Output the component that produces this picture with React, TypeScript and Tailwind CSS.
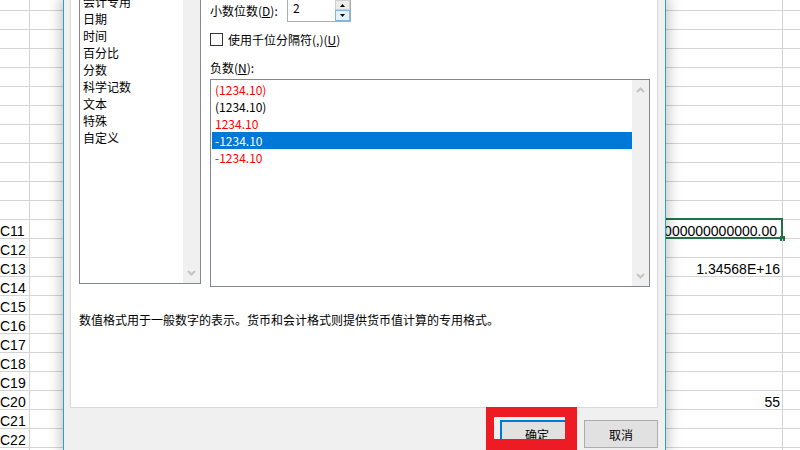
import React from "react";

const categories = ["常规", "数值", "货币", "会计专用", "日期", "时间", "百分比", "分数", "科学记数", "文本", "特殊", "自定义"];

const negatives: { text: string; color: string; selected?: boolean }[] = [
  { text: "(1234.10)", color: "text-[#ff0000]" },
  { text: "(1234.10)", color: "text-black" },
  { text: "1234.10", color: "text-[#ff0000]" },
  { text: "-1234.10", color: "text-white", selected: true },
  { text: "-1234.10", color: "text-[#ff0000]" },
];

function Chevron({ up }: { up?: boolean }) {
  return (
    <svg width="9" height="6" viewBox="0 0 9 6">
      {up ? (
        <polyline points="1,5 4.5,1.5 8,5" fill="none" stroke="#c4c4c4" strokeWidth="2" />
      ) : (
        <polyline points="1,1 4.5,4.5 8,1" fill="none" stroke="#c4c4c4" strokeWidth="2" />
      )}
    </svg>
  );
}

function Sheet() {
  const rows = Array.from({ length: 25 }, (_, k) => k);
  return (
    <div className="-mt-[8px] flex flex-col font-['Liberation_Sans',Arial,sans-serif] text-[14px] leading-[14px] text-black">
      {rows.map((k) => {
        const label = k >= 12 && k <= 23 ? `C${k - 1}` : "";
        let right = "";
        if (k === 12) right = "13456789000000000000.00";
        if (k === 14) right = "1.34568E+16";
        if (k === 21) right = "55";
        return (
          <div key={k} className="relative flex h-[19px] border-b border-[#d4d4d4]">
            <div className="flex w-[30px] items-end overflow-hidden whitespace-nowrap border-r border-[#d4d4d4]">
              {label}
            </div>
            <div
              className={`flex w-[753px] items-end justify-end overflow-hidden whitespace-nowrap border-r border-[#d4d4d4] ${
                k === 12 ? "pr-[5px]" : "pr-[2px]"
              }`}
            >
              {right}
            </div>
            <div className="flex-1" />
            {k === 12 && (
              <>
                <div className="absolute left-[400px] top-[-2px] h-[21px] w-[383px] border-2 border-[#217346]" />
                <div className="absolute left-[780px] top-[16px] h-[5px] w-[5px] bg-[#217346]" />
              </>
            )}
          </div>
        );
      })}
    </div>
  );
}

export default function App() {
  return (
    <div className="relative h-[450px] w-[800px] overflow-hidden bg-white">
      <Sheet />

      {/* Dialog window */}
      <div className="absolute left-[63px] top-0 z-10 flex h-[450px] w-[603px] flex-col border-x border-[#2aa3b8] bg-[#f0f0f0] pl-[6px] pr-[7px] font-['Noto_Sans_CJK_SC','Noto_Sans',sans-serif] text-[12px] leading-[17px] text-black shadow-[0_0_12px_3px_rgba(0,0,0,0.22)]">
        <div className="flex h-[408px] flex-col border-x border-b border-[#d9d9d9] bg-white pl-[8px]">
          <div className="-mt-[60px] flex">
            {/* Category list */}
            <div className="flex h-[344px] w-[122px] border border-[#828790] bg-white">
              <div className="flex flex-1 flex-col pt-[1px]">
                {categories.map((c) => (
                  <div
                    key={c}
                    className={`h-[17px] whitespace-nowrap pl-[3px] ${c === "数值" ? "bg-[#0078d7] text-white" : ""}`}
                  >
                    {c}
                  </div>
                ))}
              </div>
              <div className="flex w-[17px] flex-col items-center justify-end bg-[#f0f0f0] pb-[7px]">
                <Chevron />
              </div>
            </div>

            {/* Right column */}
            <div className="ml-[9px] mt-[59px] flex w-[440px] flex-col">
              <div className="flex h-[23px] items-center">
                <div className="w-[77px] whitespace-nowrap">
                  小数位数(<span className="underline">D</span>):
                </div>
                <div className="flex h-[23px] w-[64px] border border-[#abadb3] bg-white">
                  <div className="-mt-[1px] flex-1 pl-[5px]">2</div>
                  <div className="flex w-[15px] flex-col">
                    <div className="flex h-[10px] items-center justify-center border border-[#cfcfcf] bg-[#ececec]">
                      <svg width="5" height="3" viewBox="0 0 5 3">
                        <polygon points="0,3 2.5,0 5,3" fill="#000" />
                      </svg>
                    </div>
                    <div className="flex h-[11px] items-center justify-center border border-[#7eb4ea] bg-[#e5f1fb]">
                      <svg width="5" height="3" viewBox="0 0 5 3">
                        <polygon points="0,0 2.5,3 5,0" fill="#000" />
                      </svg>
                    </div>
                  </div>
                </div>
              </div>

              <div className="mt-[11px] flex h-[13px] items-center">
                <div className="h-[13px] w-[13px] border border-[#333333] bg-white" />
                <div className="ml-[5px] whitespace-nowrap">
                  使用千位分隔符(,)(<span className="underline">U</span>)
                </div>
              </div>

              <div className="mt-[13px] h-[17px] whitespace-nowrap">
                负数(<span className="underline">N</span>):
              </div>

              <div className="mt-[3px] flex h-[208px] border border-[#828790] bg-white">
                <div className="flex flex-1 flex-col pl-[1px] pt-[1px]">
                  {negatives.map((n, i) => (
                    <div
                      key={i}
                      className={`h-[17px] pl-[3px] ${n.color} ${n.selected ? "bg-[#0078d7]" : ""}`}
                    >
                      {n.text}
                    </div>
                  ))}
                </div>
                <div className="flex w-[17px] flex-col items-center justify-between bg-[#f0f0f0] pb-[7px] pt-[7px]">
                  <Chevron up />
                  <Chevron />
                </div>
              </div>
            </div>
          </div>

          <div className="mt-[24px] whitespace-nowrap">
            数值格式用于一般数字的表示。货币和会计格式则提供货币值计算的专用格式。
          </div>
        </div>

        <div className="mt-[12px] flex justify-end gap-[10px]">
          <div className="flex h-[28px] w-[74px] items-center justify-center border-2 border-[#0078d7] bg-[#e1e1e1]">
            确定
          </div>
          <div className="flex h-[28px] w-[74px] items-center justify-center border border-[#adadad] bg-[#e1e1e1]">
            取消
          </div>
        </div>
      </div>

      {/* Red highlight annotation */}
      <div className="absolute left-[486px] top-[407px] z-20 h-[43px] w-[91px] border-b-[11px] border-l-[8px] border-r-[12px] border-t-[10px] border-[#ed1c24]" />
    </div>
  );
}
